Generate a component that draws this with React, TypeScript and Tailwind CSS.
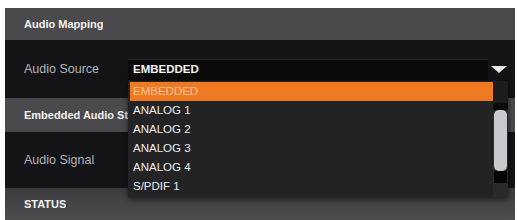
import React from "react";

const options = ["EMBEDDED", "ANALOG 1", "ANALOG 2", "ANALOG 3", "ANALOG 4", "S/PDIF 1"];

function SectionHeader({ title, className = "" }: { title: string; className?: string }) {
  return (
    <div
      className={`flex items-center pl-[19px] bg-[#4a4a4d] text-[11px] font-bold text-[#f2f2f2] ${className}`}
    >
      {/* text is cut where the open list starts */}
      <span className="max-w-[104px] overflow-hidden whitespace-nowrap">{title}</span>
    </div>
  );
}

function FieldRow({ label, height, children }: { label: string; height: string; children?: React.ReactNode }) {
  return (
    <div className={`flex items-center bg-[#141416] ${height}`}>
      <div className="w-[123px] shrink-0 pl-[19px] text-[12.5px] text-[#b4b4b8]">{label}</div>
      {children}
    </div>
  );
}

export default function App() {
  return (
    <div
      className="w-[517px] h-[220px] bg-white pt-[8px] pl-[5px] pr-[2px] overflow-hidden"
      style={{ fontFamily: '"Liberation Sans", Arial, sans-serif' }}
    >
      <div className="relative h-full bg-[#141416]">
        <SectionHeader title="Audio Mapping" className="h-[32px]" />

        <FieldRow label="Audio Source" height="h-[58px]">
          <div className="flex items-center">
            <div className="w-[360px] h-[21px] bg-[#0b0b0c] border-t border-[#262628] flex items-center pl-[5px] text-[11.5px] font-bold text-[#f4f4f4]">
              EMBEDDED
            </div>
            <svg width="18" height="9" viewBox="0 0 18 9" className="ml-[2px] mt-[1px]">
              <path d="M1 1 H17 L9 8 Z" fill="#e8e8ea" />
            </svg>
          </div>
        </FieldRow>

        <SectionHeader title="Embedded Audio Status" className="h-[34px]" />

        <FieldRow label="Audio Signal" height="h-[56px]" />

        <SectionHeader title="STATUS" className="h-[32px] bg-gradient-to-b from-[#3c3c3f] to-[#4e4e51]" />

        {/* open dropdown list */}
        <div className="absolute left-[123px] top-[73px] w-[380px] h-[116px] bg-[#232326] shadow-[0_2px_6px_rgba(0,0,0,0.6)] flex">
          <div className="flex-1 pt-[1px] pl-[2px]">
            {options.map((o, i) => (
              <div
                key={o}
                className={`h-[19px] flex items-center pl-[3px] text-[11.5px] ${
                  i === 0 ? "bg-[#ef7a22] text-[#fbc59a]" : "text-[#ececee]"
                }`}
              >
                {o}
              </div>
            ))}
          </div>
          <div className="w-[15px] flex flex-col bg-[#2a2a2d]">
            <div className="h-[22px] bg-[#1c1c1e]" />
            <div className="h-[7px] bg-[#0a0a0b]" />
            <div className="h-[61px] mx-[1px] rounded-[5px] bg-[#c9c9ce]" />
            <div className="h-[12px] mx-[1px] bg-[#050506]" />
          </div>
        </div>
      </div>
    </div>
  );
}
